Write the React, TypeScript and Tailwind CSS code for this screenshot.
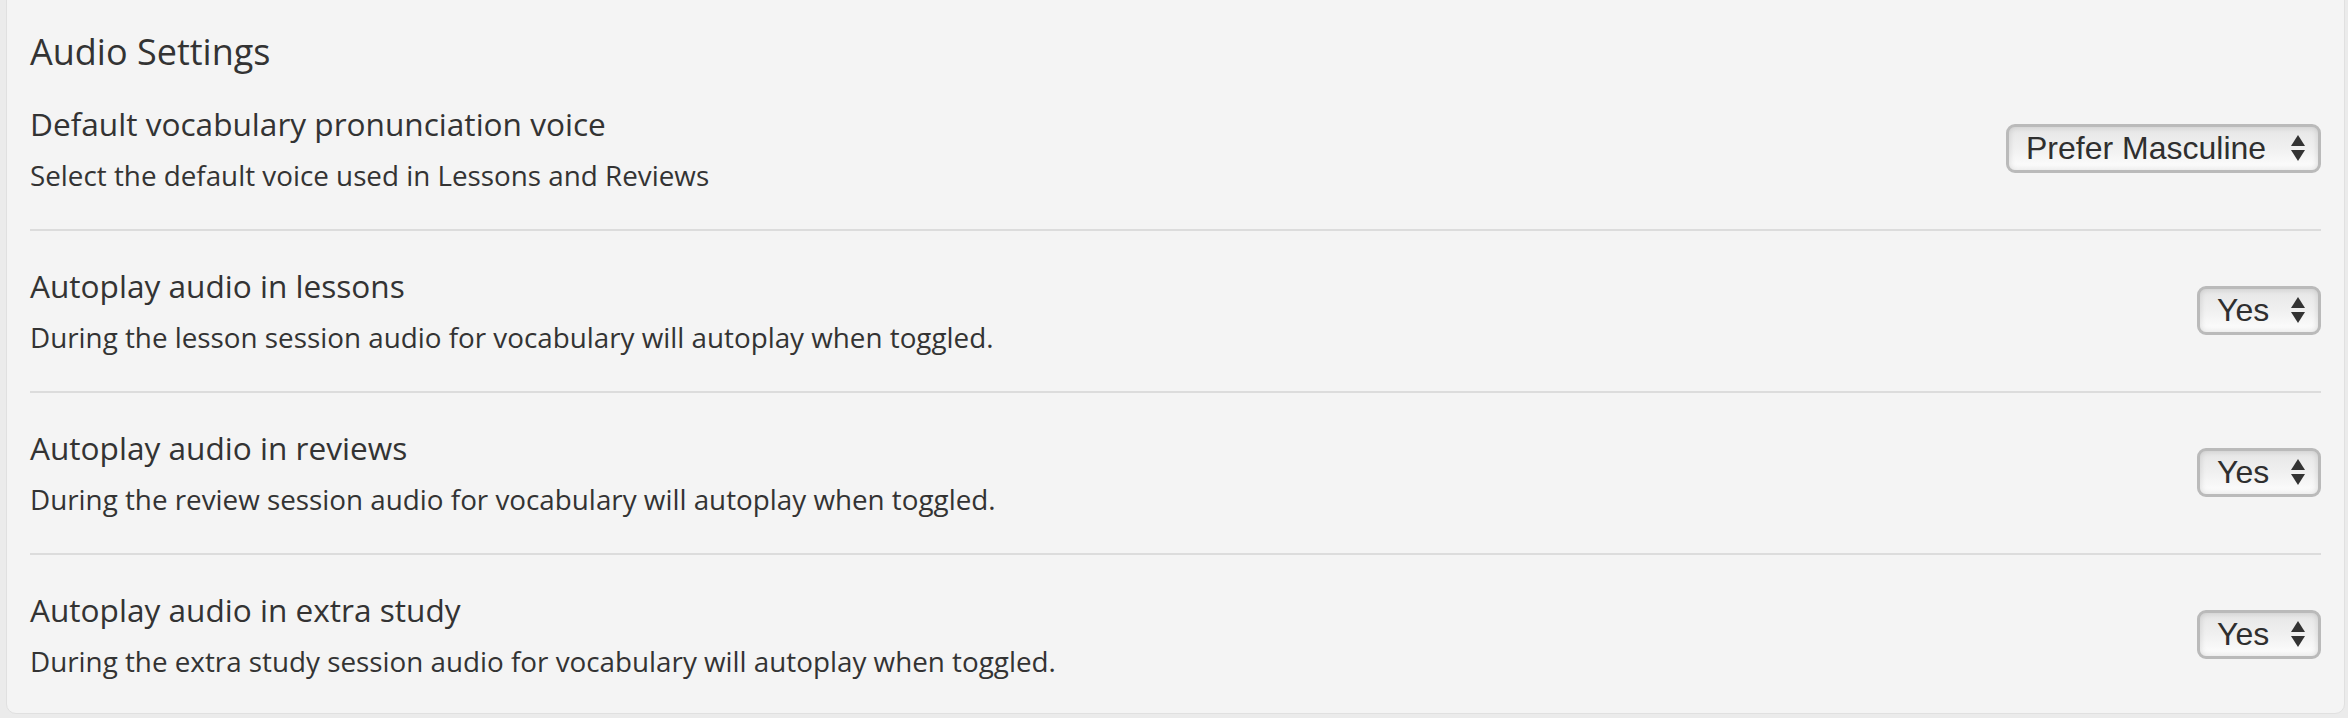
import React from "react"

interface SettingRow {
  title: string
  description: string
  value: string
  width: string
}

const rows: SettingRow[] = [
  {
    title: "Default vocabulary pronunciation voice",
    description: "Select the default voice used in Lessons and Reviews",
    value: "Prefer Masculine",
    width: "w-[315px]",
  },
  {
    title: "Autoplay audio in lessons",
    description: "During the lesson session audio for vocabulary will autoplay when toggled.",
    value: "Yes",
    width: "w-[124px]",
  },
  {
    title: "Autoplay audio in reviews",
    description: "During the review session audio for vocabulary will autoplay when toggled.",
    value: "Yes",
    width: "w-[124px]",
  },
  {
    title: "Autoplay audio in extra study",
    description: "During the extra study session audio for vocabulary will autoplay when toggled.",
    value: "Yes",
    width: "w-[124px]",
  },
]

function SelectBox({ value, width }: { value: string; width: string }) {
  return (
    <div
      className={`${width} h-[49px] shrink-0 flex items-center justify-between pl-[17px] pr-[13px] rounded-[9px] border-[3px] border-[#bababa] bg-gradient-to-b from-[#e6e6e6] via-[#f0f0f0] to-[#fefefe] shadow-[inset_0_0_6px_rgba(0,0,0,0.14)] text-[32px] leading-none text-[#2f2f2f] font-['Liberation_Sans',Arial,sans-serif]`}
    >
      <span className="-mt-[1px]">{value}</span>
      <svg width="14" height="28" viewBox="0 0 14 28" className="shrink-0">
        <polygon points="0,11 7,0 14,11" fill="#333" />
        <polygon points="0,15 14,15 7,26" fill="#333" />
      </svg>
    </div>
  )
}

export default function App() {
  return (
    <div className="w-full h-[718px] bg-[#ebebeb] overflow-hidden font-['Open_Sans','Noto_Sans',sans-serif] text-[#333]">
      <div className="-mt-[10px] ml-[6px] mr-[3px] bg-[#f4f4f4] border border-[#e0e0e0] rounded-b-[10px] pt-[37px] pl-[23px] pr-[23px] pb-[34px]">
        <h2 className="text-[36px] leading-[48px] font-normal">Audio Settings</h2>
        {rows.map((row, i) => (
          <div
            key={row.title}
            className={`flex items-center justify-between ${i === 0 ? "pt-[28px]" : "pt-[35px]"} ${
              i === rows.length - 1 ? "" : "pb-[36px] border-b-2 border-[#dcdcdc]"
            }`}
          >
            <div>
              <div className="text-[31.6px] leading-[40px]">{row.title}</div>
              <div className="text-[27.8px] leading-[36px] mt-[13px]">{row.description}</div>
            </div>
            <SelectBox value={row.value} width={row.width} />
          </div>
        ))}
      </div>
    </div>
  )
}
